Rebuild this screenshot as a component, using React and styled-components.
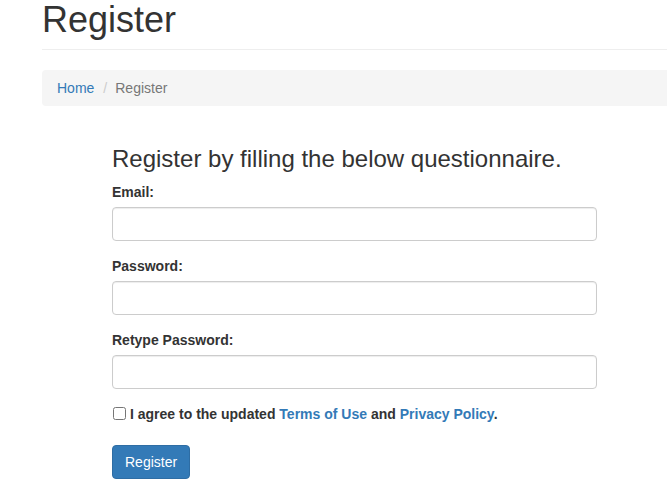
import React from "react";
import styled, { createGlobalStyle } from "styled-components";

const GlobalStyle = createGlobalStyle`
    * { box-sizing: border-box; }
    body {
        margin: 0;
        background: #fff;
        font-family: "Liberation Sans", Arial, Helvetica, sans-serif;
        font-size: 14px;
        line-height: 1.42857143;
        color: #333;
        overflow: hidden;
    }
`;

const Container = styled.div`
    padding-left: 42px;
    width: 100%;
`;

const PageHeader = styled.div`
    padding-bottom: 9px;
    border-bottom: 1px solid #eee;
    margin: 0 0 20px;
`;

const Title = styled.h1`
    margin: 0;
    font-size: 36px;
    font-weight: 500;
    line-height: 1.1;
    color: #333;
`;

const Breadcrumb = styled.ol`
    list-style: none;
    margin: 0 0 20px;
    padding: 8px 15px;
    background: #f5f5f5;
    border-radius: 4px 0 0 4px;
    display: flex;
`;

const Crumb = styled.li`
    color: ${(props) => (props.active ? "#777" : "#337ab7")};
    &:not(:first-child)::before {
        content: "/";
        padding: 0 8px 0 9px;
        color: #ccc;
    }
`;

const Link = styled.a`
    color: #337ab7;
    text-decoration: none;
    font-weight: ${(props) => (props.bold ? "bold" : "normal")};
`;

const FormCol = styled.form`
    display: flow-root;
    margin-left: 70px;
    width: 485px;
`;

const Heading = styled.h3`
    margin: 20px 0 10px;
    font-size: 24px;
    font-weight: 500;
    line-height: 1.1;
`;

const FormGroup = styled.div`
    margin-bottom: 15px;
`;

const Label = styled.label`
    display: inline-block;
    margin-bottom: 5px;
    font-weight: bold;
`;

const Input = styled.input`
    display: block;
    width: 100%;
    height: 34px;
    padding: 6px 12px;
    font: inherit;
    color: #555;
    background: #fff;
    border: 1px solid #ccc;
    border-radius: 4px;
    box-shadow: inset 0 1px 1px rgba(0, 0, 0, 0.075);
    outline: none;
`;

const CheckRow = styled.div`
    margin: 15px 0 21px;
    display: flex;
    align-items: center;
    font-weight: bold;
`;

const Check = styled.input`
    margin: 0 4px 0 1px;
    width: 13px;
    height: 13px;
`;

const Button = styled.button`
    display: inline-block;
    padding: 6px 12px;
    font: inherit;
    line-height: 1.42857143;
    color: #fff;
    background: #337ab7;
    border: 1px solid #2e6da4;
    border-radius: 4px;
    cursor: pointer;
`;

const App = () => {
    return (
        <Container>
            <GlobalStyle />
            <PageHeader>
                <Title>Register</Title>
            </PageHeader>
            <Breadcrumb>
                <Crumb><Link href="#">Home</Link></Crumb>
                <Crumb active>Register</Crumb>
            </Breadcrumb>
            <FormCol onSubmit={(e) => e.preventDefault()}>
                <Heading>Register by filling the below questionnaire.</Heading>
                <FormGroup>
                    <Label>Email:</Label>
                    <Input type="email" />
                </FormGroup>
                <FormGroup>
                    <Label>Password:</Label>
                    <Input type="password" />
                </FormGroup>
                <FormGroup>
                    <Label>Retype Password:</Label>
                    <Input type="password" />
                </FormGroup>
                <CheckRow>
                    <Check type="checkbox" />
                    <span>
                        I agree to the updated <Link bold href="#">Terms of Use</Link> and{" "}
                        <Link bold href="#">Privacy Policy</Link>.
                    </span>
                </CheckRow>
                <Button type="submit">Register</Button>
            </FormCol>
        </Container>
    );
};

export default App;
